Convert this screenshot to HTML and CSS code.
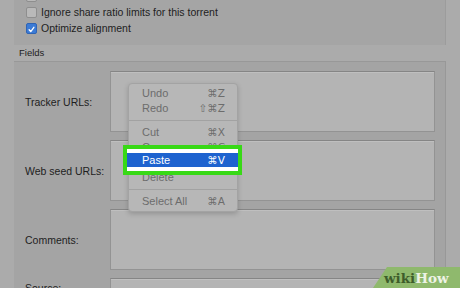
FILE: index.html
```html
<!DOCTYPE html>
<html lang="en">
    <head>
        <meta charset="UTF-8" />
        <title>Torrent fields</title>
        <link rel="stylesheet" href="styles.css">
    </head>
    <body>
        <div class="opts">
            <ul class="opt-list">
                <li><span class="box"></span>Start when added</li>
                <li><span class="box"></span>Ignore share ratio limits for this torrent</li>
                <li><span class="box checked"><svg viewBox="0 0 11 11" width="11" height="11"><path d="M2.6 5.8 L4.6 8 L8.4 2.8" fill="none" stroke="#fff" stroke-width="1.6" stroke-linecap="round" stroke-linejoin="round"/></svg></span>Optimize alignment</li>
            </ul>
        </div>

        <div class="legend">Fields</div>

        <div class="group">
            <div class="row">
                <label>Tracker URLs:</label>
                <div class="field"></div>
            </div>
            <div class="row">
                <label>Web seed URLs:</label>
                <div class="field"></div>
            </div>
            <div class="row">
                <label>Comments:</label>
                <div class="field"></div>
            </div>
            <div class="row short">
                <label>Source:</label>
                <div class="field"></div>
            </div>
        </div>

        <!-- context menu -->
        <div class="menu">
            <div class="item"><span>Undo</span><span>⌘Z</span></div>
            <div class="item"><span>Redo</span><span>⇧⌘Z</span></div>
            <div class="sep"></div>
            <div class="item"><span>Cut</span><span>⌘X</span></div>
            <div class="item"><span>Copy</span><span>⌘C</span></div>
            <div class="item"><span>Paste</span><span>⌘V</span></div>
            <div class="item"><span>Delete</span><span></span></div>
            <div class="sep"></div>
            <div class="item"><span>Select All</span><span>⌘A</span></div>
        </div>

        <!-- green highlight -->
        <div class="mark">
            <div class="item active"><span>Paste</span><span>⌘V</span></div>
        </div>

        <div class="wm"><span class="wiki">wiki</span><span class="how">How</span></div>
    </body>
</html>
```

FILE: styles.css
```css
* {
    margin: 0;
    padding: 0;
    box-sizing: border-box;
}

ul {
    list-style: none;
}

body {
    width: 460px;
    height: 288px;
    overflow: hidden;
    position: relative;
    background-color: #ababab;
    font-family: "Liberation Sans", Arial, sans-serif;
    color: #1e1e1e;
}

/* checkbox panel */
.opts {
    margin-left: 14px;
    width: 432px;
    height: 45px;
    overflow: hidden;
    background-color: #a5a5a5;
    border-right: 1px solid #9c9c9c;
}

.opt-list {
    margin-top: -12px;
    padding-left: 12px;
}

.opt-list li {
    height: 16px;
    display: flex;
    align-items: center;
    font-size: 10.5px;
}

.box {
    width: 11px;
    height: 11px;
    margin-right: 4px;
    border: 1px solid #8e8e8e;
    border-radius: 2px;
    background-color: #b9b9b9;
    display: flex;
}

.box.checked {
    background-color: #3b7bd6;
    border-color: #2f64b4;
}

.legend {
    height: 16px;
    line-height: 16px;
    padding-left: 19px;
    font-size: 9.5px;
}

/* fields group */
.group {
    margin-left: 14px;
    width: 432px;
    height: 240px;
    background-color: #a4a4a4;
    border-top: 1px solid #989898;
    border-right: 1px solid #989898;
    padding: 9px 10px 0 11px;
    display: flex;
    flex-direction: column;
    gap: 8px;
}

.row {
    height: 61px;
    display: grid;
    grid-template-columns: 85px 1fr;
    align-items: center;
}

.row.short {
    height: 20px;
}

.row label {
    font-size: 10.5px;
}

.field {
    height: 100%;
    background-color: #b4b4b4;
    border: 1px solid #939393;
    border-top-color: #858585;
    box-shadow: inset 0 1px 0 #bfbfbf;
}

/* context menu */
.menu {
    position: absolute;
    left: 128px;
    top: 83px;
    width: 110px;
    height: 129px;
    padding-top: 2px;
    background-color: #b7b7b7;
    border: 1px solid #a3a3a3;
    border-radius: 4px;
    box-shadow: 0 2px 5px rgba(0, 0, 0, .18);
}

.item {
    height: 15px;
    line-height: 15px;
    padding: 0 12px 0 13px;
    display: flex;
    justify-content: space-between;
    font-size: 11px;
    color: #6c6c6c;
}

.item span:last-child {
    font-family: "DejaVu Sans", sans-serif;
    font-size: 10.5px;
}

.sep {
    height: 9px;
    position: relative;
}

.sep::after {
    content: '';
    position: absolute;
    left: 0;
    right: 0;
    top: 4px;
    height: 1px;
    background-color: #a2a2a2;
}

.mark {
    position: absolute;
    left: 123px;
    top: 145px;
    width: 119px;
    height: 30px;
    border: 4px solid #38d916;
    background-color: #fff;
    padding-top: 4px;
}

.item.active {
    height: 14px;
    line-height: 14px;
    padding: 0 13px 0 15px;
    background-color: #1e63cf;
    color: #fff;
}

/* watermark */
.wm {
    position: absolute;
    right: 0;
    bottom: 0;
    width: 87px;
    height: 21px;
    padding: 3px 0 0 11px;
    background-color: #8fb96d;
    clip-path: polygon(14px 0, 100% 0, 100% 100%, 0 100%);
    font-family: "DejaVu Serif", serif;
    font-weight: bold;
    font-size: 13.5px;
}

.wiki {
    color: #3e5d2b;
}

.how {
    color: #eef3e6;
}
```
